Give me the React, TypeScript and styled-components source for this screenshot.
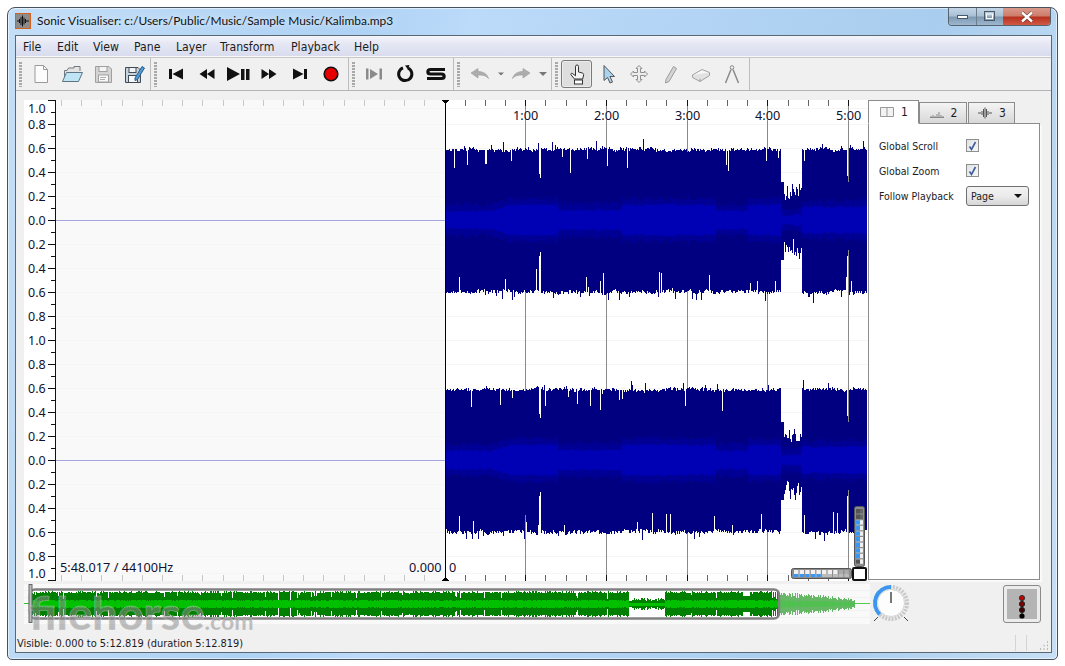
import styled, { createGlobalStyle } from 'styled-components';

const GlobalStyle = createGlobalStyle`
  html, body {
    margin: 0;
    background: #fff;
    overflow: hidden;
  }
  * { box-sizing: border-box; }
`;

const UI_FONT = '"DejaVu Sans Condensed", "DejaVu Sans", sans-serif';
const LABEL_FONT = '"Noto Sans", "DejaVu Sans", sans-serif';

/* ---------- waveform data ---------- */

const makeRandom = (seed: number) => () => {
  seed |= 0;
  seed = (seed + 0x6d2b79f5) | 0;
  let t = Math.imul(seed ^ (seed >>> 15), 1 | seed);
  t = (t + Math.imul(t ^ (t >>> 7), 61 | t)) ^ t;
  return ((t ^ (t >>> 14)) >>> 0) / 4294967296;
};

const bandAmp = (x: number) => {
  if (x < 490) return 8;
  if (x < 510) return 8 + (x - 490) * 0.3;
  if (x < 558) return 14;
  if (x < 622) return 9;
  if (x < 716) return 14;
  if (x < 748) return 8;
  if (x < 781) return 14;
  if (x < 802) return 4;
  return 12;
};

const buildChannel = (cy: number, seed: number) => {
  const rnd = makeRandom(seed);
  let outer = '';
  let mid = '';
  let inner = '';
  let wobble = 0;
  for (let x = 445; x < 867; x++) {
    wobble = wobble * 0.8 + (rnd() - 0.5) * 1.6;
    let top = 69 + wobble + rnd() * 3;
    let bot = 70 + wobble + rnd() * 4;
    if (rnd() < 0.04) top += 3 + rnd() * 7;
    if (rnd() < 0.04) bot += 3 + rnd() * 6;
    if (rnd() < 0.035) top -= 6 + rnd() * 16;
    if (rnd() < 0.035) bot -= 6 + rnd() * 16;
    if (x >= 539 && x <= 540) {
      top = x === 539 ? 46 : 42;
      bot = x === 539 ? 36 : 32;
    }
    if (x >= 847 && x <= 848) {
      top = x === 847 ? 44 : 38;
      bot = x === 847 ? 36 : 30;
    }
    if (x >= 781 && x < 802) {
      top = x < 784 ? 38 : 18 + rnd() * 18;
      bot = x < 784 ? 40 : 18 + rnd() * 22;
    }
    const band = bandAmp(x);
    outer += `M${x}.5 ${(cy - top).toFixed(0)}V${(cy + bot).toFixed(0)}`;
    const m = band + 5 + rnd() * 5;
    mid += `M${x}.5 ${(cy - m).toFixed(0)}V${(cy + m).toFixed(0)}`;
    const i = band + rnd() * 2;
    inner += `M${x}.5 ${(cy - i).toFixed(0)}V${(cy + i).toFixed(0)}`;
  }
  return { outer, mid, inner };
};

const buildOverview = () => {
  const rnd = makeRandom(77);
  const cy = 20;
  let dark = '';
  let bright = '';
  let paleOuter = '';
  let paleInner = '';
  for (let x = 7; x < 754; x++) {
    let amp = 10.5 + rnd() * 2.5;
    if (rnd() < 0.06) amp -= 2 + rnd() * 5;
    let core = 3 + rnd() * 1.5;
    if (x > 604 && x < 641) {
      amp = 3 + rnd() * 3;
      core = 1.5;
    }
    if (x > 718 && x < 726) amp = 8;
    dark += `M${x}.5 ${(cy - amp).toFixed(0)}V${(cy + amp).toFixed(0)}`;
    bright += `M${x}.5 ${(cy - core).toFixed(0)}V${(cy + core).toFixed(0)}`;
  }
  for (let x = 755; x < 831; x++) {
    const f = (831 - x) / 76;
    const amp = Math.max(1, (3 + 8 * Math.sqrt(f)) * (0.6 + rnd() * 0.5));
    paleOuter += `M${x}.5 ${(cy - amp).toFixed(0)}V${(cy + amp).toFixed(0)}`;
    paleInner += `M${x}.5 ${(cy - amp * 0.35).toFixed(0)}V${(cy + amp * 0.35).toFixed(0)}`;
  }
  return { dark, bright, paleOuter, paleInner };
};

const channelA = buildChannel(220, 11);
const channelB = buildChannel(460, 29);
const overview = buildOverview();

const SCALE_VALUES = ['1.0', '0.8', '0.6', '0.4', '0.2', '0.0', '0.2', '0.4', '0.6', '0.8', '1.0', '0.8', '0.6', '0.4', '0.2', '0.0', '0.2', '0.4', '0.6', '0.8', '1.0'];
const SCALE_Y = [108, 124, 148, 172, 196, 220, 244, 268, 292, 316, 340, 364, 388, 412, 436, 460, 484, 508, 532, 556, 573];
const TIME_MARKS = [
  { label: '1:00', x: 525 },
  { label: '2:00', x: 606 },
  { label: '3:00', x: 687 },
  { label: '4:00', x: 767 },
  { label: '5:00', x: 848 },
];

/* ---------- window chrome ---------- */

const Page = styled.div`
  width: 1065px;
  height: 666px;
  padding: 7px;
  font-family: ${UI_FONT};
  font-size: 12px;
  color: #1c1c1c;
  position: relative;
`;

const Frame = styled.div`
  width: 1051px;
  height: 653px;
  border: 1px solid #46525f;
  border-radius: 8px 8px 5px 5px;
  background: linear-gradient(100deg, #c4def7 0%, #aed2f4 30%, #bcdafa 40%, #a9cdee 80%, #c6dff5 100%);
  box-shadow: inset 0 0 0 1px rgba(255, 255, 255, 0.55);
  display: flex;
  flex-direction: column;
`;

const TitleBar = styled.div`
  height: 27px;
  flex: none;
  padding-left: 7px;
  display: flex;
  align-items: flex-start;
  position: relative;
`;

const AppIcon = styled.svg`
  margin-top: 5px;
  width: 16px;
  height: 16px;
  flex: none;
`;

const TitleText = styled.span`
  margin: 4px 0 0 6px;
  font-family: 'Lato', ${LABEL_FONT};
  font-size: 11.95px;
  line-height: 18px;
  color: #111;
  text-shadow: 0 0 6px rgba(255, 255, 255, 0.9);
`;

const Caption = styled.div`
  margin-left: auto;
  margin-right: 6px;
  display: flex;
  height: 18px;
  border: 1px solid #56646f;
  border-top: none;
  border-radius: 0 0 4px 4px;
  overflow: hidden;
`;

const CaptionButton = styled.div<{ $close?: boolean }>`
  width: ${(p) => (p.$close ? 47 : 27)}px;
  display: flex;
  align-items: center;
  justify-content: center;
  border-left: ${(p) => (p.$close ? 'none' : '1px solid #6c7d8c')};
  &:first-child { border-left: none; }
  background: ${(p) =>
    p.$close
      ? 'linear-gradient(#d99a8c, #cf7d6c 45%, #b8321f 55%, #cf5a44)'
      : 'linear-gradient(#c4d6e6, #a9c0d6 45%, #7f9ab3 55%, #9db7cf)'};
`;

const Client = styled.div`
  flex: 1;
  margin: 0 5px 6px 7px;
  border: 1px solid #5a6874;
  background: #f0f0f0;
  display: flex;
  flex-direction: column;
  min-height: 0;
`;

const MenuBar = styled.div`
  height: 21px;
  flex: none;
  display: flex;
  align-items: center;
  background: linear-gradient(#f4f5fb, #e6e8f4 35%, #d8dcee);
  border-bottom: 1px solid #f7f7fb;
`;

const MenuItem = styled.span<{ $width: number }>`
  width: ${(p) => p.$width}px;
  flex: none;
  padding: 2px 0 0 7px;
  line-height: 20px;
  font-size: 12.2px;
`;

const Toolbar = styled.div`
  height: 34px;
  flex: none;
  display: flex;
  align-items: stretch;
  border-top: 1px solid #c8c8c8;
  border-bottom: 1px solid #b4b4b4;
  background: #f0f0f0;
`;

const ToolGroup = styled.div<{ $tight?: boolean }>`
  display: flex;
  align-items: center;
  padding: 0 ${(p) => (p.$tight ? 1 : 2)}px 0 3px;
  border-right: 1px solid #bdbdbd;
`;

const Grip = styled.div`
  width: 3px;
  height: 25px;
  margin-right: 3px;
  background-image: radial-gradient(circle at 1px 1px, #a8a8a8 0.8px, transparent 1px);
  background-size: 2px 3px;
`;

const ToolButton = styled.div<{ $width?: number; $active?: boolean }>`
  width: ${(p) => p.$width ?? 31}px;
  height: 28px;
  display: flex;
  align-items: center;
  justify-content: center;
  border-radius: 3px;
  border: 1px solid ${(p) => (p.$active ? '#7a7a7a' : 'transparent')};
  background: ${(p) => (p.$active ? '#dedede' : 'transparent')};
  box-shadow: ${(p) => (p.$active ? 'inset 0 0 0 1px #ececec' : 'none')};
`;

const Icon = styled.svg`
  width: 24px;
  height: 24px;
  flex: none;
`;

const Main = styled.div`
  height: 491px;
  flex: none;
  padding: 9px 10px 0 8px;
  display: flex;
  align-items: flex-start;
`;

/* ---------- pane ---------- */

const Pane = styled.div`
  width: 844px;
  height: 481px;
  flex: none;
  display: flex;
  background: #fff;
`;

const ScaleSvg = styled.svg`
  width: 32px;
  height: 481px;
  flex: none;
  display: block;
`;

const ScaleText = styled.text`
  font-family: ${LABEL_FONT};
  font-size: 12.5px;
  fill: #101030;
`;

const Canvas = styled.div`
  position: relative;
  width: 812px;
  height: 481px;
  flex: none;
  overflow: hidden;
`;

const WaveSvg = styled.svg`
  display: block;
  width: 812px;
  height: 481px;
`;

const CanvasLabel = styled.span<{ $left: number; $top: number }>`
  position: absolute;
  left: ${(p) => p.$left}px;
  top: ${(p) => p.$top}px;
  font-family: ${LABEL_FONT};
  font-size: 12.7px;
  line-height: 16px;
  color: #101030;
  white-space: nowrap;
  text-shadow: 0 0 2px #fff;
`;

const WheelV = styled.svg`
  position: absolute;
  right: 3px;
  bottom: 14px;
  width: 11px;
  height: 61px;
`;

const WheelH = styled.svg`
  position: absolute;
  right: 16px;
  bottom: 2px;
  width: 61px;
  height: 11px;
`;

const CornerBox = styled.div`
  position: absolute;
  right: 1px;
  bottom: 0;
  width: 15px;
  height: 14px;
  background: #fff;
  border: 2px solid #111;
  border-radius: 2px;
`;

/* ---------- side panel ---------- */

const Side = styled.div`
  width: 172px;
  height: 480px;
  flex: none;
  display: flex;
  flex-direction: column;
`;

const TabStrip = styled.div`
  height: 24px;
  flex: none;
  display: flex;
  align-items: flex-end;
  position: relative;
  z-index: 1;
  margin-bottom: -1px;
`;

const Tab = styled.div<{ $active?: boolean; $width: number }>`
  width: ${(p) => p.$width}px;
  height: ${(p) => (p.$active ? 24 : 22)}px;
  margin-right: ${(p) => (p.$active ? 0 : 1)}px;
  display: flex;
  align-items: center;
  justify-content: center;
  gap: 6px;
  font-size: 12px;
  border: 1px solid #8c8c8c;
  border-bottom: ${(p) => (p.$active ? '1px solid #fff' : '1px solid #8c8c8c')};
  background: ${(p) => (p.$active ? '#fff' : 'linear-gradient(#f4f4f4, #e6e6e6 50%, #d8d8d8)')};
`;

const TabIcon = styled.svg`
  width: 16px;
  height: 12px;
`;

const Panel = styled.div`
  flex: 1;
  border: 1px solid #8c8c8c;
  background: #fff;
  box-shadow: 2px 2px 0 #fafafa;
  padding: 9px 10px 0;
  display: grid;
  grid-template-columns: 87px auto;
  grid-auto-rows: 25px;
  align-items: center;
  align-content: start;
  font-size: 10.5px;
`;

const CheckBox = styled.div`
  width: 13px;
  height: 13px;
  border: 1px solid #8e8f8f;
  background: linear-gradient(135deg, #dfe2e6, #f6f7f8);
  display: flex;
  align-items: center;
  justify-content: center;
`;

const Select = styled.div`
  width: 63px;
  height: 20px;
  border: 1px solid #707070;
  border-radius: 3px;
  padding: 0 4px;
  display: flex;
  align-items: center;
  justify-content: space-between;
  background: linear-gradient(#f2f2f2, #ebebeb 50%, #d6d6d6);
  &::after {
    content: '';
    border-left: 4px solid transparent;
    border-right: 4px solid transparent;
    border-top: 4px solid #111;
    margin-right: 2px;
  }
`;

/* ---------- bottom ---------- */

const BottomRow = styled.div`
  height: 40px;
  flex: none;
  padding-left: 8px;
  margin-top: 2px;
  display: flex;
  align-items: flex-start;
`;

const OverviewSvg = styled.svg`
  width: 846px;
  height: 40px;
  flex: none;
  display: block;
`;

const KnobSvg = styled.svg`
  width: 40px;
  height: 40px;
  flex: none;
  margin-left: 1px;
`;

const LedButton = styled.div`
  margin: 1px 0 0 92px;
  width: 38px;
  height: 38px;
  flex: none;
  border: 1px solid #8a8a8a;
  border-radius: 3px;
  padding: 3px;
  background: #ececec;
`;

const LedFace = styled.svg`
  width: 30px;
  height: 30px;
  display: block;
`;

const StatusBar = styled.div`
  flex: 1;
  padding: 10px 2px 0 1px;
  display: flex;
  align-items: center;
  font-size: 10.95px;
`;

const StatusDivider = styled.div<{ $first?: boolean }>`
  width: 1px;
  height: 16px;
  background: #d4d4d4;
  margin-left: ${(p) => (p.$first ? 'auto' : '10px')};
`;

const SizeGrip = styled.svg`
  width: 10px;
  height: 10px;
  margin-left: 12px;
  align-self: flex-end;
  margin-bottom: 1px;
`;

const Watermark = styled.div`
  position: absolute;
  left: 29px;
  top: 591px;
  font-family: 'Lato', 'Open Sans', sans-serif;
  font-weight: 900;
  font-size: 45px;
  line-height: 45px;
  color: rgba(140, 140, 140, 0.55);
  -webkit-text-stroke: 1px rgba(255, 255, 255, 0.25);
  white-space: nowrap;
  span {
    font-size: 23px;
  }
`;

/* ---------- drawings ---------- */

const TransportIcon = ({ d }: { d: string }) => (
  <Icon viewBox="0 0 24 24">
    <path d={d} fill="#111" />
  </Icon>
);

const WheelCells = ({ vertical }: { vertical?: boolean }) => {
  const cells = Array.from({ length: 10 }, (_, i) => i);
  return (
    <>
      <rect x={0.5} y={0.5} width={vertical ? 10 : 60} height={vertical ? 60 : 10} rx={2} fill="#8c8c8c" stroke="#555" />
      {cells.map((i) =>
        vertical ? (
          <g key={i}>
            <rect x={2} y={3 + i * 5.6} width={7} height={4.4} fill={i < 2 ? '#666' : '#f0f0f0'} />
            <rect x={2} y={3 + i * 5.6} width={4} height={4.4} fill={i < 2 || i > 8 ? '#555' : '#3a96f0'} />
          </g>
        ) : (
          <g key={i}>
            <rect x={3 + i * 5.6} y={2} width={4.4} height={7} fill={i > 7 ? '#aaa' : '#f0f0f0'} />
            <rect x={3 + i * 5.6} y={6} width={4.4} height={3} fill={i < 5 ? '#3a96f0' : '#bbb'} />
          </g>
        ),
      )}
    </>
  );
};

const ScaleAxis = () => {
  const minorYs = Array.from({ length: 20 }, (_, i) => 12 + i * 24);
  return (
    <ScaleSvg viewBox="0 0 32 481">
      <path d="M31.5 0V481M24 0.5H32M24 480.5H32" stroke="#111" shapeRendering="crispEdges" fill="none" />
      {SCALE_Y.map((y, i) => (
        <g key={i}>
          {i !== 0 && i !== 20 && <path d={`M24 ${y - 100 + 0.5}H32`} stroke="#111" shapeRendering="crispEdges" />}
          <ScaleText x={4} y={y - 100 + 5}>
            {SCALE_VALUES[i]}
          </ScaleText>
        </g>
      ))}
      {minorYs.map((y) => (
        <path key={y} d={`M27 ${y + 0.5}H32`} stroke="#111" shapeRendering="crispEdges" />
      ))}
    </ScaleSvg>
  );
};

const WaveView = () => {
  const ticks = Array.from({ length: 40 }, (_, i) => 445 + (i - 19) * 20.18).filter((x) => x > 56 && x < 867);
  return (
    <WaveSvg viewBox="0 0 812 481">
      <g transform="translate(-56 -100)" shapeRendering="crispEdges">
        <rect x={56} y={100} width={389} height={481} fill="#f9f9f9" />
        <rect x={445} y={100} width={422} height={481} fill="#fff" />
        {SCALE_Y.map((y, i) => (
          <path key={i} d={`M56 ${y + 0.5}H867`} stroke="#f5f5f5" />
        ))}
        <path d="M56 220.5H445M56 460.5H445" stroke="#a4a4de" />
        {ticks.map((x, i) => {
          const right = x > 446;
          const c = right ? '#666' : '#c8c8c8';
          const px = Math.floor(x) + 0.5;
          return <path key={i} d={`M${px} 100V106M${px} 575V581`} stroke={c} />;
        })}
        {TIME_MARKS.map((m) => (
          <path key={m.x} d={`M${m.x + 0.5} 100V581`} stroke="#8a8a8a" />
        ))}
        {TIME_MARKS.map((m) => (
          <path key={m.x} d={`M${m.x + 0.5} 100V106M${m.x + 0.5} 575V581`} stroke="#111" />
        ))}
        {[channelA, channelB].map((c, i) => (
          <g key={i} fill="none">
            <path d={c.outer} stroke="#000080" />
            <path d={c.mid} stroke="#000094" />
            <path d={c.inner} stroke="#0000b4" />
          </g>
        ))}
        <path d="M445.5 100V581" stroke="#000" />
        <path d="M442 100H449L445.5 104ZM442 581H449L445.5 577Z" fill="#000" />
      </g>
    </WaveSvg>
  );
};

const OverviewStrip = () => (
  <OverviewSvg viewBox="0 0 846 40">
    <rect width={846} height={40} fill="#f9f9f9" />
    <g stroke="#f1f1f1" shapeRendering="crispEdges">
      <path d="M0 6.5H846M0 13.5H846M0 26.5H846M0 33.5H846" />
    </g>
    <rect x={6} y={5} width={748} height={30} fill="#fff" />
    <g fill="none" shapeRendering="crispEdges">
      <path d="M0 19.5H7" stroke="#30c030" />
      <path d={overview.dark} stroke="#008000" />
      <path d={overview.bright} stroke="#00c000" />
      <path d={overview.paleOuter} stroke="#66b866" />
      <path d={overview.paleInner} stroke="#50c050" />
      <path d="M830 19.5H846" stroke="#55c855" />
    </g>
    <rect x={6} y={5.5} width={749} height={29} rx={5} fill="none" stroke="#808080" strokeWidth={2.5} />
    <rect x={5} y={0.5} width={3} height={38} fill="#bbb" stroke="#666" />
  </OverviewSvg>
);

const Knob = () => (
  <KnobSvg viewBox="0 0 40 40">
    <circle cx={20} cy={19} r={16} fill="none" stroke="#c9c9c9" strokeWidth={4} strokeDasharray="2 1.2" />
    <path d="M8.7 30.3A16 16 0 0 1 20 3" fill="none" stroke="#3a96ee" strokeWidth={4} />
    <circle cx={20} cy={19} r={13.5} fill="#fdfdfd" stroke="#d6d6d6" />
    <path d="M20 8V19" stroke="#777" strokeWidth={2} />
    <path d="M3 37L7 33M37 37L33 33" stroke="#444" strokeWidth={1} />
  </KnobSvg>
);

const MENUS: [string, number][] = [
  ['File', 34],
  ['Edit', 36],
  ['View', 41],
  ['Pane', 42],
  ['Layer', 44],
  ['Transform', 71],
  ['Playback', 63],
  ['Help', 40],
];

export default function App() {
  return (
    <Page>
      <GlobalStyle />
      <Frame>
        <TitleBar>
          <AppIcon viewBox="0 0 16 16">
            <rect x={0.5} y={0.5} width={15} height={15} fill="#8c8c8c" stroke="#d4611c" />
            <path d="M2 8H4M4.5 6V10M6 4V12M7.5 2.5V13.5M9 4.5V11.5M10.5 6V10M12 7V9M13 8H14" stroke="#111" fill="none" />
          </AppIcon>
          <TitleText>Sonic Visualiser: c:/Users/Public/Music/Sample Music/Kalimba.mp3</TitleText>
          <Caption>
            <CaptionButton>
              <svg width="12" height="6" viewBox="0 0 12 6">
                <rect x={0.5} y={1.5} width={10} height={3} fill="#fff" stroke="#46586a" />
              </svg>
            </CaptionButton>
            <CaptionButton>
              <svg width="12" height="11" viewBox="0 0 12 11">
                <rect x={0.5} y={0.5} width={10} height={9} fill="none" stroke="#46586a" />
                <rect x={2.5} y={3} width={6} height={4.5} fill="none" stroke="#fff" />
              </svg>
            </CaptionButton>
            <CaptionButton $close>
              <svg width="14" height="12" viewBox="0 0 14 12">
                <path d="M2 1.5L12 10.5M12 1.5L2 10.5" stroke="#5a2a22" strokeWidth={3.6} />
                <path d="M2 1.5L12 10.5M12 1.5L2 10.5" stroke="#fff" strokeWidth={2.4} />
              </svg>
            </CaptionButton>
          </Caption>
        </TitleBar>
        <Client>
          <MenuBar>
            {MENUS.map(([m, w]) => (
              <MenuItem key={m} $width={w}>
                {m}
              </MenuItem>
            ))}
          </MenuBar>
          <Toolbar>
            <ToolGroup $tight>
              <Grip />
              <ToolButton>
                <Icon viewBox="0 0 24 24">
                  <path d="M6 3.5H14.5L18.5 7.5V20.5H6Z" fill="#fcfcfc" stroke="#9a9a9a" />
                  <path d="M14.5 3.5V7.5H18.5" fill="none" stroke="#9a9a9a" />
                </Icon>
              </ToolButton>
              <ToolButton>
                <Icon viewBox="0 0 24 24">
                  <path d="M4.5 19V8.5H7L8.5 6H14V4.5H20V9" fill="#e3e3e3" stroke="#6f7a82" />
                  <path d="M2.5 19.5L6.5 10.5H22.5L18.5 19.5Z" fill="#bfe4f4" stroke="#5f7582" />
                </Icon>
              </ToolButton>
              <ToolButton>
                <Icon viewBox="0 0 24 24">
                  <path d="M4.5 4.5H18L20.5 7V20.5H4.5Z" fill="#d4d4d4" stroke="#a0a0a0" />
                  <rect x={8} y={4.5} width={8} height={5} fill="#f4f4f4" stroke="#a0a0a0" />
                  <rect x={7.5} y={13} width={10} height={7} fill="#f8f8f8" stroke="#a0a0a0" />
                  <path d="M9 15.5H15M9 17.5H14" stroke="#b0b0b0" />
                </Icon>
              </ToolButton>
              <ToolButton>
                <Icon viewBox="0 0 24 24">
                  <path d="M3.5 5.5H16L18.5 8V20.5H3.5Z" fill="#c6d2dc" stroke="#3f4c58" />
                  <rect x={7} y={5.5} width={7} height={5} fill="#f2f2f2" stroke="#3f4c58" />
                  <rect x={6.5} y={13.5} width={9} height={7} fill="#f8f8f8" stroke="#3f4c58" />
                  <path d="M13 16L20 4.5L22.5 6L15.5 17.5L13 18.5Z" fill="#4f9ad8" stroke="#2f5c80" />
                </Icon>
              </ToolButton>
            </ToolGroup>
            <ToolGroup>
              <Grip />
              <ToolButton>
                <TransportIcon d="M5 7H8V17H5ZM8.5 12L19 6.5V17.5Z" />
              </ToolButton>
              <ToolButton>
                <TransportIcon d="M4.5 12L12 7V17ZM12 12L19.5 7V17Z" />
              </ToolButton>
              <ToolButton $width={31}>
                <svg width="26" height="24" viewBox="0 0 26 24">
                  <path d="M2 5L15 12L2 19ZM16 7H19.5V18H16ZM21 7H24.5V18H21Z" fill="#111" />
                </svg>
              </ToolButton>
              <ToolButton>
                <TransportIcon d="M4.5 7L12 12L4.5 17ZM12 7L19.5 12L12 17Z" />
              </ToolButton>
              <ToolButton>
                <TransportIcon d="M5 6.5L15.5 12L5 17.5ZM16 7H19V17H16Z" />
              </ToolButton>
              <ToolButton>
                <Icon viewBox="0 0 24 24">
                  <circle cx={12} cy={12} r={6.8} fill="#e60000" stroke="#111" strokeWidth={1.6} />
                </Icon>
              </ToolButton>
            </ToolGroup>
            <ToolGroup>
              <Grip />
              <ToolButton>
                <Icon viewBox="0 0 24 24">
                  <path d="M4 6.5H6.5V17.5H4ZM17.5 6.5H20V17.5H17.5ZM8 7L16 12L8 17Z" fill="#8a8a8a" />
                </Icon>
              </ToolButton>
              <ToolButton>
                <Icon viewBox="0 0 24 24">
                  <path d="M10 5.8A6.6 6.6 0 1 0 15 6" fill="none" stroke="#111" strokeWidth={3} />
                  <path d="M12 3.5L16.5 3L15 7.5Z" fill="#111" />
                </Icon>
              </ToolButton>
              <ToolButton>
                <Icon viewBox="0 0 24 24">
                  <path d="M21 7.5H6.5C3 7.5 3 12 6.5 12H17.5C21 12 21 16.5 17.5 16.5H3" fill="none" stroke="#111" strokeWidth={3.2} />
                </Icon>
              </ToolButton>
            </ToolGroup>
            <ToolGroup>
              <Grip />
              <ToolButton $width={34}>
                <Icon viewBox="0 0 24 24">
                  <path d="M3 11L10 6.5V9.5C15 9.5 19 11.5 20.5 16.5C18 13.5 14.5 12.8 10 13V16Z" fill="#adadad" stroke="#9a9a9a" strokeWidth={0.6} />
                </Icon>
              </ToolButton>
              <ToolButton $width={8}>
                <svg width="8" height="4" viewBox="0 0 8 4">
                  <path d="M0 0H8L4 4Z" fill="#777" />
                </svg>
              </ToolButton>
              <ToolButton $width={32}>
                <Icon viewBox="0 0 24 24">
                  <path d="M21 11L14 6.5V9.5C9 9.5 5 11.5 3.5 16.5C6 13.5 9.5 12.8 14 13V16Z" fill="#adadad" stroke="#9a9a9a" strokeWidth={0.6} />
                </Icon>
              </ToolButton>
              <ToolButton $width={12}>
                <svg width="8" height="4" viewBox="0 0 8 4">
                  <path d="M0 0H8L4 4Z" fill="#777" />
                </svg>
              </ToolButton>
            </ToolGroup>
            <ToolGroup>
              <Grip />
              <ToolButton $active>
                <Icon viewBox="0 0 24 24">
                  <path
                    d="M10.5 4.5a1.5 1.5 0 0 1 3 0V10l3.8 1c1 .3 1.5 1 1.3 2l-.9 4H9.5L6 12.8c-.7-1 .7-2.1 1.6-1.2l2.9 2.2Z"
                    fill="#f4f4f4"
                    stroke="#333"
                  />
                  <rect x={9.5} y={18} width={8} height={4} fill="#fff" stroke="#333" />
                </Icon>
              </ToolButton>
              <ToolButton>
                <Icon viewBox="0 0 24 24">
                  <path d="M8 3.5V18.5L11.5 15.5L14 21L16.5 20L14 14.5H18.5Z" fill="#a9d2ef" stroke="#555" />
                </Icon>
              </ToolButton>
              <ToolButton>
                <Icon viewBox="0 0 24 24">
                  <path
                    d="M12 3.5L15 6.5H13.5V10.5H17.5V9L20.5 12L17.5 15V13.5H13.5V17.5H15L12 20.5L9 17.5H10.5V13.5H6.5V15L3.5 12L6.5 9V10.5H10.5V6.5H9Z"
                    fill="#ececec"
                    stroke="#8f8f8f"
                  />
                </Icon>
              </ToolButton>
              <ToolButton>
                <Icon viewBox="0 0 24 24">
                  <path d="M15.5 4.5L18.5 6.5L11 19.5L7.5 21L8 17.5Z" fill="#d4d4d4" stroke="#9a9a9a" />
                </Icon>
              </ToolButton>
              <ToolButton>
                <Icon viewBox="0 0 24 24">
                  <path d="M3.5 13L13 7.5L20.5 10.5L11 16.5Z" fill="#f6f6f6" stroke="#a0a0a0" />
                  <path d="M3.5 13V15.5L11 19.5L20.5 13.5V10.5M11 16.5V19.5" fill="#e2e2e2" stroke="#a0a0a0" />
                </Icon>
              </ToolButton>
              <ToolButton>
                <Icon viewBox="0 0 24 24">
                  <circle cx={12} cy={5.5} r={1.8} fill="none" stroke="#8a8a8a" />
                  <path d="M11 7.5L5.5 21M13 7.5L18.5 21" fill="none" stroke="#8a8a8a" strokeWidth={1.5} />
                </Icon>
              </ToolButton>
            </ToolGroup>
          </Toolbar>
          <Main>
            <Pane>
              <ScaleAxis />
              <Canvas>
                <WaveView />
                {TIME_MARKS.map((m) => (
                  <CanvasLabel key={m.label} $left={m.x - 56 - 12} $top={7}>
                    {m.label}
                  </CanvasLabel>
                ))}
                <CanvasLabel $left={4} $top={459}>
                  5:48.017 / 44100Hz
                </CanvasLabel>
                <CanvasLabel $left={353} $top={459}>
                  0.000
                </CanvasLabel>
                <CanvasLabel $left={393} $top={459}>
                  0
                </CanvasLabel>
                <WheelV viewBox="0 0 11 61">
                  <WheelCells vertical />
                </WheelV>
                <WheelH viewBox="0 0 61 11">
                  <WheelCells />
                </WheelH>
                <CornerBox />
              </Canvas>
            </Pane>
            <Side>
              <TabStrip>
                <Tab $active $width={51}>
                  <TabIcon viewBox="0 0 16 12">
                    <path d="M1.5 1.5H14.5V10.5H1.5ZM8 1.5V10.5" fill="#f2f2f2" stroke="#999" />
                  </TabIcon>
                  1
                </Tab>
                <Tab $width={48}>
                  <TabIcon viewBox="0 0 16 12">
                    <path d="M2 10V9M4 10V8M6 10V9M8 10V7M10 10V5M12 10V8M14 10V9M1 10.5H15" stroke="#888" fill="none" />
                  </TabIcon>
                  2
                </Tab>
                <Tab $width={47}>
                  <TabIcon viewBox="0 0 16 12">
                    <path d="M1 6H4M5 4V8M6.5 2V10M8 0.5V11.5M9.5 2V10M11 4V8M12 6H15" stroke="#555" fill="none" />
                  </TabIcon>
                  3
                </Tab>
              </TabStrip>
              <Panel>
                <span>Global Scroll</span>
                <CheckBox>
                  <svg width="9" height="10" viewBox="0 0 9 10">
                    <path d="M1.5 5.5L3.5 8.5L7.5 1" fill="none" stroke="#3f5c9a" strokeWidth={1.6} />
                  </svg>
                </CheckBox>
                <span>Global Zoom</span>
                <CheckBox>
                  <svg width="9" height="10" viewBox="0 0 9 10">
                    <path d="M1.5 5.5L3.5 8.5L7.5 1" fill="none" stroke="#3f5c9a" strokeWidth={1.6} />
                  </svg>
                </CheckBox>
                <span>Follow Playback</span>
                <Select>Page</Select>
              </Panel>
            </Side>
          </Main>
          <BottomRow>
            <OverviewStrip />
            <Knob />
            <LedButton>
              <LedFace viewBox="0 0 30 30">
                <rect width={30} height={30} fill="#b4b4b4" />
                <path d="M15 8V27" stroke="#222" />
                <circle cx={15} cy={9} r={2.6} fill="#c00000" stroke="#333" />
                <circle cx={15} cy={15} r={2.6} fill="#800000" stroke="#222" />
                <circle cx={15} cy={21} r={2.6} fill="#400000" stroke="#222" />
                <circle cx={15} cy={27} r={2.6} fill="#000" />
              </LedFace>
            </LedButton>
          </BottomRow>
          <StatusBar>
            <span>Visible: 0.000 to 5:12.819 (duration 5:12.819)</span>
            <StatusDivider $first />
            <StatusDivider />
            <SizeGrip viewBox="0 0 10 10">
              <path d="M8 1H9M8 4.5H9M4.5 4.5H5.5M8 8H9M4.5 8H5.5M1 8H2" stroke="#a8a8a8" strokeWidth={1.4} />
            </SizeGrip>
          </StatusBar>
        </Client>
      </Frame>
      <Watermark>
        filehorse<span>.com</span>
      </Watermark>
    </Page>
  );
}
